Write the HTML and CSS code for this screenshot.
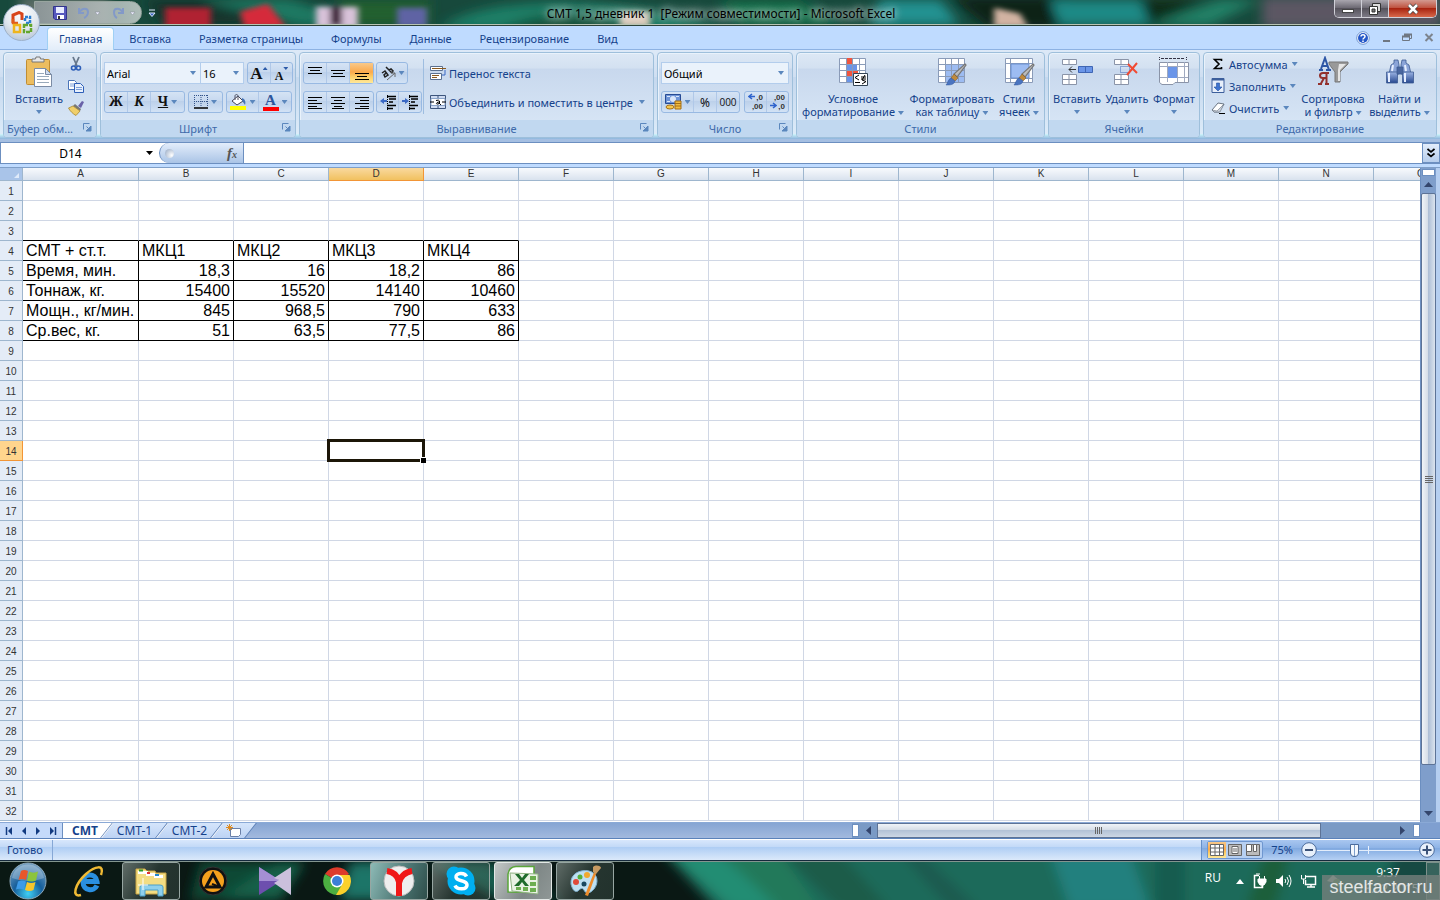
FILE: index.html
```html
<!DOCTYPE html>
<html lang="ru">
<head>
<meta charset="utf-8">
<title>СМТ 1,5 дневник 1 - Microsoft Excel</title>
<link rel="stylesheet" href="styles.css">
</head>
<body>
<svg class="defs" width="0" height="0" aria-hidden="true">
  <defs>
    <linearGradient id="brushMetal" x1="0" x2="1" y1="0" y2="1"><stop offset="0" stop-color="#fff"/><stop offset="1" stop-color="#777"/></linearGradient>
    <linearGradient id="blueBall" x1="0" x2="0" y1="0" y2="1"><stop offset="0" stop-color="#9cb4e4"/><stop offset="1" stop-color="#26478f"/></linearGradient>
    <filter id="soft" x="-20%" y="-20%" width="140%" height="140%"><feGaussianBlur stdDeviation="6"/></filter>
    <filter id="soft2" x="-20%" y="-20%" width="140%" height="140%"><feGaussianBlur stdDeviation="3"/></filter>
    <symbol id="launch" viewBox="0 0 9 9"><path d="M.5 6.500V.5H6.500" fill="none" stroke="#5b87bd"/><path d="M3.500 3.500l2 2M8 3v5H3z" fill="#5b87bd" stroke="#5b87bd"/></symbol>
    <symbol id="brush" viewBox="0 0 22 24"><path d="M20 1l1 1L12 14l-3-3z" fill="url(#brushMetal)" stroke="#777" stroke-width="1.200"/><path d="M9 11l4 4-3 3-4-3z" fill="#c08a3c" stroke="#7b5420" stroke-width=".5"/><path d="M6 15l4 3c-1 4-5 4-9 4 2-2 2-6 5-7z" fill="#4a74c0" stroke="#33569b" stroke-width=".5"/></symbol>
  </defs>
</svg>

<header class="titlebar">
  <svg class="aero" viewBox="0 0 1440 26" preserveAspectRatio="none" aria-hidden="true">
    <rect width="1440" height="26" fill="#17493c"/>
    <g filter="url(#soft)">
      <rect x="20" y="-5" width="90" height="36" fill="#5c6d66"/>
      <path d="M145 0h190l-80 26h-90z" fill="#12302b"/><path d="M200 0h90l80 26h-70z" fill="#1c7a63"/>
      <path d="M340 0h90v26h-90z" fill="#24602f"/><path d="M440 30C480-6 620-6 720 30z" fill="#1a8068"/><path d="M500 30c50-22 100-22 140 0z" fill="#155039"/>
      <path d="M720 0h80l40 26H740z" fill="#116a44"/><path d="M880 0h60l20 26h-90z" fill="#219292"/>
      <path d="M950-4h120v34H990z" fill="#0c2019"/><path d="M1050 0h90l20 26h-100z" fill="#1f8a86"/><path d="M1140 0h70l-60 26z" fill="#0b2a16"/><path d="M1220 0h40l-50 26h-60z" fill="#218267"/>
      <path d="M1262-4h180v34H1262z" fill="#5b5764"/>
    </g>
    <g filter="url(#soft2)">
      <rect x="165" y="8" width="46" height="22" fill="#b02433"/><path d="M240 12l28-8 18 24h-42z" fill="#d52c3b"/>
      <rect x="316" y="7" width="42" height="22" fill="#d9c3da"/><rect x="330" y="7" width="12" height="20" fill="#3c2439"/>
      <rect x="397" y="8" width="30" height="20" fill="#5f63a4"/><rect x="620" y="12" width="30" height="16" fill="#d9c8b8"/><path d="M994 8l26 6 8 14h-34z" fill="#d2b3a2"/>
    </g>
  </svg>
  <div class="quick">
    <button aria-label="Сохранить"><svg width="14" height="14" viewBox="0 0 14 14"><path d="M.5.5h13v13H2l-1.500-1.500z" fill="#5658bd" stroke="#32348c"/><path d="M3 1h8v6H3z" fill="#e8ecff"/><path d="M4 9h7v4H4z" fill="#fff"/><path d="M5 10h2v3H5z" fill="#333"/></svg></button>
    <button aria-label="Отменить"><svg width="24" height="14" viewBox="0 0 24 14"><path d="M2 2v5h5M2 7c3-6 9-5 9-1 0 3-2 5-4 6" fill="none" stroke="#8299c8" stroke-width="2"/><path d="M18 6h5l-2.500 3z" fill="#eef" stroke="#8b929c" stroke-width=".6"/></svg></button>
    <button aria-label="Вернуть"><svg width="26" height="14" viewBox="0 0 26 14"><path d="M12 2v5H7M12 7C9 1 3 2 3 6c0 3 1 5 3 6" fill="none" stroke="#8299c8" stroke-width="2"/><path d="M19 6h5l-2.500 3z" fill="#eef" stroke="#8b929c" stroke-width=".6"/></svg></button>
  </div>
  <button class="quick-more" aria-label="Настройка панели"><svg width="8" height="8" viewBox="0 0 8 8"><path d="M1 1h6M1 4h6L4 7.500z" stroke="#dfe9ff" fill="#3c64c0"/></svg></button>
  <h1 class="title">СМТ 1,5 дневник 1&nbsp; [Режим совместимости] - Microsoft Excel</h1>
  <div class="winbtns">
    <button aria-label="Свернуть"><svg width="14" height="12" viewBox="0 0 14 12"><rect x="1.500" y="6.500" width="11" height="3" fill="#fff" stroke="#444"/></svg></button>
    <button aria-label="Восстановить"><svg width="14" height="12" viewBox="0 0 14 12"><path d="M4.500.5h8v8h-8z" fill="#ddd" stroke="#333"/><path d="M1.500 3.500h8v8h-8z" fill="#fff" stroke="#333"/><path d="M4 6h3v3H4z" fill="#777" stroke="#333"/></svg></button>
    <button class="x" aria-label="Закрыть"><svg width="14" height="12" viewBox="0 0 14 12"><path d="M3 2l8 8M11 2l-8 8" stroke="#444" stroke-width="4"/><path d="M3 2l8 8M11 2l-8 8" stroke="#fff" stroke-width="2.500"/></svg></button>
  </div>
</header>
<button class="office" aria-label="Кнопка Office"><svg width="22" height="24" viewBox="0 0 22 24" fill="none"><path d="M11 9V3L8 1.500 2 4v8" stroke="#d8451a" stroke-width="3"/><path d="M2 8v4h5" stroke="#e05c1c" stroke-width="2.500"/><path d="M14 10V6h5v6h-5" stroke="#2d7fd0" stroke-width="2.500" stroke-dasharray="3 1"/><path d="M3 14h6v7H3z" stroke="#efb51c" stroke-width="2.500"/><path d="M13 14h7v7h-7z" stroke="#63a62c" stroke-width="2.500" stroke-dasharray="4 1"/></svg></button>

<nav class="tabs">
  <a class="tab on" href="#home">Главная</a><a class="tab" href="#insert">Вставка</a><a class="tab" href="#page">Разметка страницы</a><a class="tab" href="#formulas">Формулы</a><a class="tab" href="#data">Данные</a><a class="tab" href="#review">Рецензирование</a><a class="tab" href="#view">Вид</a>
  <div class="docbtns">
    <button aria-label="Справка"><svg width="14" height="14" viewBox="0 0 14 14"><circle cx="7" cy="7" r="6.300" fill="#fff" stroke="#6f94cf"/><circle cx="7" cy="7" r="5" fill="#2558c8"/><path d="M5 5.500c0-2.500 4-2.500 4 0C9 7 7 7 7 8.500M7 9.500V11" stroke="#fff" stroke-width="1.500" fill="none"/></svg></button>
    <button aria-label="Свернуть окно"><svg width="8" height="10" viewBox="0 0 8 10"><path d="M1 8h7" stroke="#6f7782" stroke-width="2"/></svg></button>
    <button aria-label="Восстановить окно"><svg width="10" height="9" viewBox="0 0 10 9"><path d="M2.500 3V1.500h7v4H8M.5 3.500h7v4h-7z" fill="none" stroke="#6f7782"/><path d="M0 3.500h8M2 1.500h8" stroke="#6f7782" stroke-width="2"/></svg></button>
    <button aria-label="Закрыть окно"><svg width="10" height="9" viewBox="0 0 10 9"><path d="M1.500 1l7 7M8.500 1l-7 7" stroke="#7d848e" stroke-width="2"/></svg></button>
  </div>
</nav>

<main class="ribbon">
  <section class="group g-clip">
    <div class="gbody">
      <button class="big"><svg width="28" height="32" viewBox="0 0 28 32"><rect x="1.500" y="3.500" width="23" height="25" rx="1" fill="#ecbd60" stroke="#c08d33"/><path d="M7 6V3h3.500L11 1h4l.5 2H19v3z" fill="#e8e8e8" stroke="#777"/><path d="M9.500 12.500h11l6 6v12h-17z" fill="#fff" stroke="#7b8ca5"/><path d="M20.500 12.500v6h6z" fill="#cfdcef" stroke="#7b8ca5"/><path d="M12 17.500h7M12 20.500h12M12 23.500h12M12 26.500h12" stroke="#9ab"/></svg><span>Вставить</span><i class="arr"></i></button>
      <div class="stack clipicons">
        <button aria-label="Вырезать"><svg width="16" height="16" viewBox="0 0 16 16"><path d="M5 1l4 9M11 1L7 10" stroke="#68788c" stroke-width="1.800"/><circle cx="5.500" cy="12" r="2" fill="none" stroke="#2e5fb8" stroke-width="1.600"/><circle cx="10.500" cy="12" r="2" fill="none" stroke="#2e5fb8" stroke-width="1.600"/></svg></button>
        <button aria-label="Копировать"><svg width="16" height="16" viewBox="0 0 16 16"><path d="M.5 2.500h6l2 2v7h-8z" fill="#fff" stroke="#4a74b8"/><path d="M6.500 5.500h6l3 3v6h-9z" fill="#e8f0fc" stroke="#2e5fb8"/><path d="M8 9.500h6M8 11.500h6M2 6h4M2 8h4" stroke="#7ea0d8"/></svg></button>
        <button aria-label="Формат по образцу"><svg width="16" height="16" viewBox="0 0 16 16"><path d="M10 6l4-5 2 1-3 6z" fill="#6a62a8"/><path d="M7 4l6 5-1 2-7-5z" fill="#777"/><path d="M5 6l7 5-4 4.500C5 14 2 11 .5 8z" fill="#f0cf6a" stroke="#a88830" stroke-width=".8"/></svg></button>
      </div>
    </div>
    <footer>Буфер обм...<svg class="launch" width="9" height="9"><use href="#launch"/></svg></footer>
  </section>

  <section class="group g-font">
    <div class="gbody rows">
      <div class="row">
        <div class="combos"><label class="combo font"><input value="Arial" aria-label="Шрифт"><i class="arr"></i></label><label class="combo size"><input value="16" aria-label="Размер"><i class="arr"></i></label></div>
        <div class="bg"><button class="w23 serif" aria-label="Увеличить размер"><b class="a18">A</b><i class="arr up"></i></button><button class="w21 serif" aria-label="Уменьшить размер"><b class="a13">A</b><i class="arr up dn"></i></button></div>
      </div>
      <div class="row">
        <div class="bg"><button class="w23 serif"><b>Ж</b></button><button class="w23 serif"><b><em>К</em></b></button><button class="w34 serif"><b><u>Ч</u></b><i class="arr"></i></button></div>
        <div class="bg"><button class="w34" aria-label="Границы"><svg width="14" height="14" viewBox="0 0 14 14"><path d="M.5 0v12M7 0v12M13.500 0v12M0 .5h14M0 6.500h14" stroke="#33538a" stroke-dasharray="1 1"/><path d="M0 13h14" stroke="#000" stroke-width="1.500"/></svg><i class="arr"></i></button></div>
        <div class="bg"><button class="w33" aria-label="Цвет заливки"><svg width="17" height="16" viewBox="0 0 17 16"><path d="M2 7l6-5 5 5-6 4z" fill="#fff" stroke="#445" /><path d="M5 6V2c0-2 3-2 3 0v4" fill="none" stroke="#556"/><path d="M12 4c3 1 4 4 3 7-1-2-2-3-3-4z" fill="#4473b5"/><path d="M0 12h16v4H0z" fill="#ff0"/></svg><i class="arr"></i></button><button class="w33" aria-label="Цвет текста"><span class="fontcolor">A</span><i class="arr"></i></button></div>
      </div>
    </div>
    <footer>Шрифт<svg class="launch" width="9" height="9"><use href="#launch"/></svg></footer>
  </section>

  <section class="group g-align">
    <div class="gbody cols">
      <div class="rows">
        <div class="row">
          <div class="bg"><button class="w23" aria-label="По верхнему краю"><svg width="14" height="14"><path d="M0 1.500h14M2 4.500h10M0 7.500h14" stroke="#000"/></svg></button><button class="w23" aria-label="По середине"><svg width="14" height="14"><path d="M0 4.500h14M2 7.500h10M0 10.500h14" stroke="#000"/></svg></button><button class="w23 hot" aria-label="По нижнему краю"><svg width="14" height="14"><path d="M0 7.500h14M2 10.500h10M0 13.500h14" stroke="#000"/></svg></button></div>
          <div class="bg"><button class="w30" aria-label="Ориентация"><svg width="16" height="16" viewBox="0 0 16 16"><path d="M2 8l3-2 3 4-3 2-1-2 2-2M6 2l6 6M9 5l2-1 2 2-1 2" fill="none" stroke="#222" stroke-width="1.500"/><path d="M7 15l8-7M15 12V8h-4" fill="none" stroke="#666"/></svg><i class="arr"></i></button></div>
        </div>
        <div class="row">
          <div class="bg"><button class="w23" aria-label="По левому краю"><svg width="14" height="13"><path d="M0 1.500h14M0 4.500h9M0 7.500h14M0 10.500h9M0 12.500h14" stroke="#000"/></svg></button><button class="w23" aria-label="По центру"><svg width="14" height="13"><path d="M0 1.500h14M3 4.500h8M0 7.500h14M3 10.500h8M1 12.500h12" stroke="#000"/></svg></button><button class="w23" aria-label="По правому краю"><svg width="14" height="13"><path d="M0 1.500h14M5 4.500h9M0 7.500h14M5 10.500h9M0 12.500h14" stroke="#000"/></svg></button></div>
          <div class="bg"><button class="w22" aria-label="Уменьшить отступ"><svg width="16" height="15"><path d="M7 1.500h9M9 4h7M9 7h4M7 10.500h9M7 13.500h6" stroke="#000" stroke-width="1.500"/><path d="M7.500 0v15" stroke="#000" stroke-dasharray="1 1"/><path d="M4 3v2h3v2H4v2L0 6z" fill="#3a68c4"/></svg></button><button class="w22" aria-label="Увеличить отступ"><svg width="16" height="15"><path d="M7 1.500h9M9 4h7M9 7h4M7 10.500h9M7 13.500h6" stroke="#000" stroke-width="1.500"/><path d="M7.500 0v15" stroke="#000" stroke-dasharray="1 1"/><path d="M3 3v2H0v2h3v2l4-3z" fill="#3a68c4"/></svg></button></div>
        </div>
      </div>
      <div class="rows wide">
        <button class="txt"><svg width="16" height="16" viewBox="0 0 16 16"><path d="M.5 1.500h12v4H.5zM.5 8.500h11v6H.5z" fill="#fff" stroke="#5a7090"/><path d="M2 3.500h14M2 10.500h7M2 12.500h5" stroke="#8a5a20"/><path d="M15 5v5h-3" stroke="#3a68c4" fill="none"/></svg>Перенос текста</button>
        <button class="txt"><svg width="16" height="16" viewBox="0 0 16 16"><path d="M.5 1.500h15v13H.5zM8 1v3M8 12v3" fill="#cfdcf2" stroke="#3d557c"/><path d="M1 4.500h14v7H1z" fill="#fff" stroke="#8aa3c8"/><path d="M6 6.500q3-1 3.500.5v3M9.500 8C6 8 5.500 10.500 8 10q1.500-.5 1.500-1M10 10.500h1" fill="none" stroke="#000"/><path d="M0 8h4M12 8h4" stroke="#000"/></svg>Объединить и поместить в центре<i class="arr"></i></button>
      </div>
    </div>
    <footer>Выравнивание<svg class="launch" width="9" height="9"><use href="#launch"/></svg></footer>
  </section>

  <section class="group g-num">
    <div class="gbody rows">
      <label class="combo"><input value="Общий" aria-label="Числовой формат"><i class="arr"></i></label>
      <div class="row">
        <div class="bg"><button class="w33" aria-label="Финансовый формат"><svg width="17" height="16" viewBox="0 0 17 16"><path d="M.5.5h15v9H.5z" fill="#6d93d6" stroke="#274b94"/><ellipse cx="8" cy="5" rx="3" ry="3" fill="#d9e6fb"/><path d="M2 2.500h3M11 2.500h3M2 7.500h3" stroke="#dbe7fb"/><path d="M10 7h6v8h-6z" fill="#f1bd42" stroke="#a66f14"/><path d="M10 9.500h6M10 12h6" stroke="#a66f14"/><ellipse cx="5" cy="13" rx="4" ry="2" fill="#f3c852" stroke="#a66f14"/></svg><i class="arr"></i></button><button class="w23 n13">%</button><button class="w22 n12">000</button></div>
        <div class="bg"><button class="w22 dec" aria-label="Увеличить разрядность"><span><svg width="7" height="7"><path d="M7 3.500H1M4 1L1 3.500 4 6" fill="none" stroke="#2d62cc" stroke-width="1.500"/></svg>,0</span><span>,00</span></button><button class="w21 dec" aria-label="Уменьшить разрядность"><span>,00</span><span><svg width="7" height="7"><path d="M0 3.500h6M3 1l3 2.500L3 6" fill="none" stroke="#2d62cc" stroke-width="1.500"/></svg>,0</span></button></div>
      </div>
    </div>
    <footer>Число<svg class="launch" width="9" height="9"><use href="#launch"/></svg></footer>
  </section>

  <section class="group g-styles">
    <div class="gbody">
      <button class="big w112"><svg width="32" height="32" viewBox="0 0 32 32"><path d="M2.500 2.500h26v24h-26z" fill="#fff" stroke="#8a9bb8"/><path d="M9 2h7v6H9zM9 14h12v6H9z" fill="#f0553e"/><path d="M9 8h11v6H9zM9 20h6v6H9z" fill="#6a95e8"/><path d="M2 8.500h26M2 14.500h26M2 20.500h26M9.500 2v24M15.500 2v24M22.500 2v24" stroke="#8a9bb8"/><path d="M16.500 17.500h14v12h-14z" fill="#fff" stroke="#345"/><path d="M22 19l-4 2.500 4 2.500M18 26.500h5M24 21h5M24 23h5M28 19l-3 5M25 24l4 1.500-4 2.500" fill="none" stroke="#000"/></svg><span>Условное<br>форматирование<i class="arr"></i></span></button>
      <button class="big w86"><svg width="32" height="32" viewBox="0 0 32 32"><path d="M2.500 2.500h26v24h-26z" fill="#fff" stroke="#8a9bb8"/><path d="M9 8h19v18H9z" fill="#9dbcf2"/><path d="M2 8.500h26M2 14.500h26M2 20.500h26M9.500 2v24M15.500 2v24M22.500 2v24" stroke="#8a9bb8"/><use href="#brush" x="9" y="7" width="22" height="24"/></svg><span>Форматировать<br>как таблицу<i class="arr"></i></span></button>
      <button class="big w46"><svg width="32" height="32" viewBox="0 0 32 32"><path d="M2.500 2.500h27v24h-27z" fill="#fff" stroke="#8a9bb8"/><path d="M2 7.500h27M2 22.500h27M7.500 2v24M25.500 2v24" stroke="#8a9bb8"/><path d="M8 8h18v14H8z" fill="#9dbcf2" stroke="#6b8fd0"/><use href="#brush" x="10" y="7" width="22" height="24"/></svg><span>Стили<br>ячеек<i class="arr"></i></span></button>
    </div>
    <footer>Стили</footer>
  </section>

  <section class="group g-cells">
    <div class="gbody">
      <button class="big w52"><svg width="32" height="32" viewBox="0 0 32 32"><path d="M1.500 3.500h14v5h-14zM8 3v5M1.500 18.500h14v10h-14zM8 18v10M1 23.500h14" fill="#fff" stroke="#8a94a8"/><path d="M17.500 10.500h14v6h-14zM24.500 10v6" fill="#6a95e8" stroke="#3f66b4"/><path d="M15 13.500H8M11 10.500l-3 3 3 3" fill="none" stroke="#333"/></svg><span>Вставить</span><i class="arr"></i></button>
      <button class="big w48"><svg width="32" height="32" viewBox="0 0 32 32"><path d="M3.500 3.500h14v5h-14zM10 3v5M3.500 18.500h14v10h-14zM10 18v10M3 23.500h14" fill="#fff" stroke="#8a94a8"/><path d="M9.500 10.500h9v6h-9z" fill="none" stroke="#3f66b4" stroke-dasharray="1 1"/><path d="M17 8l9 9M26 7l-10 12" stroke="#f04a32" stroke-width="2"/></svg><span>Удалить</span><i class="arr"></i></button>
      <button class="big w44"><svg width="32" height="32" viewBox="0 0 32 32"><path d="M1.500 6.500h29v20H17l-2 2H4l-2.500-2z" fill="#fff" stroke="#8a94a8"/><path d="M2 10.500h28M2 21.500h28M9.500 6v20M19.500 6v20M26.500 6v20" stroke="#a0aac0"/><path d="M10 11h9v11h-9z" fill="#6a95e8"/><path d="M3 2.500h24" stroke="#334" stroke-dasharray="3 1"/><path d="M1.500 1v4M28.500 1v4" stroke="#334" stroke-dasharray="1 1"/></svg><span>Формат</span><i class="arr"></i></button>
    </div>
    <footer>Ячейки</footer>
  </section>

  <section class="group g-edit">
    <div class="gbody">
      <div class="stack edits">
        <button class="txt"><svg width="14" height="16" viewBox="0 0 14 16"><path d="M10.500 5V3.500H3.500L8 8l-4.500 4.500h7V11" fill="none" stroke="#000" stroke-width="1.600"/></svg>Автосумма<i class="arr"></i></button>
        <button class="txt"><svg width="14" height="16" viewBox="0 0 14 16"><path d="M1 .5h12v14H1z" fill="#e7effb" stroke="#3c5f9c"/><path d="M1 1.500h12" stroke="#3c5f9c" stroke-width="2"/><path d="M5.500 5h3v4H11l-4 4-4-4h2.500z" fill="#3f73cf" stroke="#2450a0" stroke-width=".6"/></svg>Заполнить<i class="arr"></i></button>
        <button class="txt"><svg width="14" height="16" viewBox="0 0 14 16"><path d="M1 10l6-7 6 1-5 8H3z" fill="#fff" stroke="#6b7684"/><path d="M1 10l5 1 7-7-4 8H3z" fill="#c9d0da" stroke="#6b7684" stroke-width=".6"/><path d="M8 13.500h6" stroke="#000"/></svg>Очистить<i class="arr"></i></button>
      </div>
      <button class="big w68"><svg width="32" height="32" viewBox="0 0 32 32"><path d="M12 6h19v2l-8 8v10h-5v-10l-6-8z" fill="#999" stroke="#777"/><path d="M22 8h7l-6 6v11h-2v-11z" fill="#e5e5e5"/><path d="M2 14h4M9 14h5M4 13L8 2l4 12M5 10h5" fill="none" stroke="#2d56a5" stroke-width="2"/><path d="M12 17H6c-4 0-4 5 0 5h4M9.500 17v11M7 22l-3 5.500M1 28h4M8 28h4" fill="none" stroke="#93302d" stroke-width="2"/></svg><span>Сортировка<br>и фильтр<i class="arr"></i></span></button>
      <button class="big w64"><svg width="32" height="32" viewBox="0 0 32 32" stroke="#3d5a92" stroke-width=".8"><path d="M10 4h4l1 5v9H5l2-9 3-2z" fill="#8ba4d8"/><path d="M18 4h4v3l3 2 2 9H17V9z" fill="#8ba4d8"/><path d="M2.500 16h11v11h-11zM18.500 16h11v11h-11z" fill="url(#blueBall)"/><path d="M13 11h6v7h-6z" fill="#4a669f"/><path d="M5 17v9M21 17v9M9 9l-1 6M21 9l1 6" stroke="#e6eeff" stroke-width="2"/></svg><span>Найти и<br>выделить<i class="arr"></i></span></button>
    </div>
    <footer>Редактирование</footer>
  </section>
</main>

<div class="formula">
  <div class="namebox"><input value="D14" aria-label="Имя"><i class="arr black"></i></div>
  <div class="fx"><b></b><button aria-label="Вставить функцию"><em>f<small>x</small></em></button></div>
  <input class="finput" aria-label="Строка формул">
  <button class="expand" aria-label="Развернуть"><svg width="8" height="10" viewBox="0 0 8 10"><path d="M.5 1L4 4l3.500-3M.5 5.500l3.500 3 3.500-3" fill="none" stroke="#000" stroke-width="1.700"/></svg></button>
</div>

<div class="work">
  <div class="sheet"><table class="grid" id="grid"><thead></thead><tbody></tbody></table></div>
  <div class="vscroll"><i class="split"></i><i class="vend up"></i><div class="vthumb"><i></i></div><i class="vend down"></i></div>
</div>

<div class="bottom">
  <div class="sheetnav">
    <button aria-label="Первый лист"><svg width="8" height="8"><path d="M1.500 0v8" stroke="#123a80" stroke-width="1.500"/><path d="M7 0v8L3 4z" fill="#123a80"/></svg></button>
    <button aria-label="Предыдущий лист"><svg width="8" height="8"><path d="M6 0v8L2 4z" fill="#123a80"/></svg></button>
    <button aria-label="Следующий лист"><svg width="8" height="8"><path d="M2 0v8l4-4z" fill="#123a80"/></svg></button>
    <button aria-label="Последний лист"><svg width="8" height="8"><path d="M1 0v8l4-4z" fill="#123a80"/><path d="M6.500 0v8" stroke="#123a80" stroke-width="1.500"/></svg></button>
  </div>
  <div class="sheettabs">
    <button class="on">СМТ</button><button>СМТ-1</button><button>СМТ-2</button><button class="new" aria-label="Новый лист"><svg width="16" height="14" viewBox="0 0 16 14"><path d="M4.500 4.500h10v6l-2 2h-8z" fill="#fff" stroke="#6a80a8"/><path d="M3.500 0v7M0 3.500h7M1 1l5 5M6 1L1 6" stroke="#e08a1c"/></svg></button>
  </div>
  <div class="hscroll"><i class="hsplit"></i><i class="hend left"></i><div class="hthumb"><i></i></div><i class="hgap"></i><i class="hend right"></i><i class="hsplit"></i></div>
</div>

<div class="status">
  <span class="ready">Готово</span>
  <div class="zoombar">
    <div class="views">
      <button class="hot" aria-label="Обычный"><svg width="14" height="12"><path d="M.5.5h13v11H.5zM0 4h14M0 8h14M5 0v12M9.500 0v12" fill="#fff" stroke="#666"/></svg></button>
      <button aria-label="Разметка"><svg width="14" height="12"><path d="M.5.5h13v11H.5z" fill="#bbb" stroke="#666"/><path d="M4 2.500h6v7H4z" fill="#fff" stroke="#666"/><path d="M5 5h4M5 7h4" stroke="#666"/></svg></button>
      <button aria-label="Страничный"><svg width="14" height="12"><path d="M.5.5h13v11H.5z" fill="#bbb" stroke="#666"/><path d="M.5.5h5v7h-5zM7.500.5h3v7h-3z" fill="#fff" stroke="#666"/></svg></button>
    </div>
    <button class="pct">75%</button>
    <button class="rnd" aria-label="Уменьшить"><svg width="16" height="16" viewBox="0 0 16 16"><circle cx="8" cy="8" r="7.300" fill="#e8f0fb" stroke="#4c6c9c"/><path d="M4 8h8" stroke="#3b5278" stroke-width="2"/></svg></button>
    <div class="slider"><input type="range" min="0" max="100" value="36" aria-label="Масштаб"></div>
    <button class="rnd" aria-label="Увеличить"><svg width="16" height="16" viewBox="0 0 16 16"><circle cx="8" cy="8" r="7.300" fill="#e8f0fb" stroke="#4c6c9c"/><path d="M3.500 8h9M8 3.500v9" stroke="#3b5278" stroke-width="2"/></svg></button>
  </div>
</div>

<footer class="taskbar">
  <svg class="aero" viewBox="0 0 1440 40" preserveAspectRatio="none" aria-hidden="true">
    <rect width="1440" height="40" fill="#0a1814"/>
    <g filter="url(#soft)">
      <path d="M200 0h70l-30 40h-50z" fill="#0f4a34"/><path d="M275 0h30l-25 40h-60z" fill="#17604a"/><path d="M350 0h60l-20 40h-50z" fill="#1d7568"/>
      <path d="M430 0h60l70 40h-60z" fill="#165a4c"/>
      <path d="M655-20h800v80H725z" fill="#1e6a5a"/><path d="M668-10h50l65 60h-50z" fill="#248d73"/><path d="M720-10h60l40 60h-40z" fill="#20795a"/><path d="M780-10h60l50 60h-50z" fill="#1d5c49"/><path d="M900-10h20l60 60h-30z" fill="#1b5a50"/>
      <path d="M1050-10h80l20 60h-80z" fill="#21807e"/><path d="M1155-10h30v60h-30z" fill="#195c50"/><path d="M1265-10h25l-15 60h-30z" fill="#1d5f3a"/><path d="M1395-10h70v60h-90z" fill="#164a42"/>
    </g>
  </svg>
  <div class="apps">
    <button class="start" aria-label="Пуск"><svg width="38" height="38" viewBox="0 0 38 38"><defs><radialGradient id="orb" cx=".5" cy=".85" r=".8"><stop offset="0" stop-color="#3fd0f5"/><stop offset=".5" stop-color="#175f9c"/><stop offset="1" stop-color="#6f9cc0"/></radialGradient></defs><circle cx="19" cy="19" r="18" fill="url(#orb)" stroke="#8fa9ba"/><path d="M3 16C6-2 32-2 35 16 25 20 14 20 3 16z" fill="#fff" opacity=".25"/><path d="M12 9c2-1.500 5-1 7 0l-2 9c-2-1-5-1.500-7.500 0z" fill="#e8572a"/><path d="M20 9.500c3 1.500 6 1.500 9 0l-2 9c-3 1.500-6 1-9 0z" fill="#8cc43c"/><path d="M9 19.500c3-1.500 5-1 8 0l-2 8c-3-1-6-1-8 0z" fill="#3d9be8"/><path d="M18 20c3 1.500 6 1 8.500 0l-2 8c-3 1.500-6 1-8.500 0z" fill="#f8c62c"/></svg></button>
    <button aria-label="Internet Explorer"><svg width="34" height="34" viewBox="0 0 34 34"><path d="M25 21.500c-3 6.500-14 5.500-14-3.500s13-9.500 14-.5H12" fill="none" stroke="#2a8fe0" stroke-width="5"/><path d="M29 11c4-11-6-9-15-1C3 20-1 34 9 31" fill="none" stroke="#f0ba34" stroke-width="2.500"/></svg></button>
    <button class="open" aria-label="Проводник"><svg width="34" height="34" viewBox="0 0 34 34"><path d="M2 5h9l2 2h8l1 2h10v21H2z" fill="#f3dd83" stroke="#c9a443"/><path d="M4 7h10v3H4zM12 9h9v3h-9zM20 11h9v3h-9z" fill="#fff"/><path d="M5 5.500h4v2H5z" fill="#2a9b2a"/><path d="M13 8h3v2h-3z" fill="#d33"/><path d="M21 10h4v2h-4z" fill="#28c"/><path d="M6 32V23q0-2 3-2h17q3 0 3 2v9h-5v-6H11v6z" fill="#8ed0ec" stroke="#4b9fc7"/><path d="M9 14v12M4 21h10" stroke="#fff"/></svg></button>
    <button aria-label="AIMP"><svg width="30" height="30" viewBox="0 0 30 30"><circle cx="15" cy="15" r="14" fill="#111" stroke="#333"/><circle cx="15" cy="15" r="11" fill="#f5a11d"/><path d="M15 8l7 13H8z" fill="none" stroke="#111" stroke-width="3"/><path d="M14 18l8 3" stroke="#111" stroke-width="2"/></svg></button>
    <button aria-label="KMPlayer"><svg width="32" height="28" viewBox="0 0 32 28"><path d="M0 0l22 14L0 28z" fill="#6d4fae"/><path d="M0 0l22 14H0z" fill="#a58fd4"/><path d="M32 0v28L15 16l5-3-5-2z" fill="#cbc0dc"/></svg></button>
    <button aria-label="Google Chrome"><svg width="28" height="28" viewBox="0 0 28 28"><path d="M14 14L2 7a14 14 0 0 1 24 0z" fill="#dd3b2b"/><path d="M14 14L2 7a14 14 0 0 0 12 21l6-11z" fill="#4caf41"/><path d="M14 8h12.600A14 14 0 0 1 13 28l7-12z" fill="#fbd12b"/><circle cx="14" cy="14" r="6.500" fill="#fff"/><circle cx="14" cy="14" r="5" fill="#3c7fd8"/></svg></button>
    <button class="open teal" aria-label="Яндекс"><svg width="32" height="32" viewBox="0 0 32 32"><circle cx="16" cy="16" r="15" fill="#eee" stroke="#bbb"/><path d="M4 6c8 1 11 6 12 11v14M29 6c-7 1-12 6-13 12" fill="none" stroke="#f01818" stroke-width="6"/></svg></button>
    <button class="open" aria-label="Skype"><svg width="32" height="32" viewBox="0 0 32 32"><circle cx="16" cy="16" r="13.500" fill="#00aff0"/><circle cx="9" cy="9" r="7.500" fill="#00aff0"/><circle cx="23" cy="23" r="7.500" fill="#00aff0"/><path d="M21.500 11.500C19.500 7 10.500 8 11 12c.5 5 11 2.500 11 8 0 5-10 5-12 .5" fill="none" stroke="#fff" stroke-width="3.500"/></svg></button>
    <button class="open bright" aria-label="Microsoft Excel"><svg width="32" height="32" viewBox="0 0 32 32"><path d="M1 27V9q1-7 8-7.500h18v26z" fill="#fff" stroke="#5aa63a" stroke-width="1.500"/><path d="M3 8l28 1v20L5 26z" fill="#e9f2e4" stroke="#8fb282"/><path d="M8 9h4l3 4 3-4h4l-5 6 5 6h-4l-3-4-3 4H7l6-6z" fill="#1f6b2c"/><path d="M23 11h6v4h-6zM23 17h6v4h-6zM23 23h6v4h-6zM16 22h5v4h-5zM9 22h5v3H9z" fill="#6cae50"/></svg></button>
    <button class="open" aria-label="Paint"><svg width="34" height="34" viewBox="0 0 34 34"><path d="M3 20C2 10 12 5 21 7c9 2 10 12 5 18-5 6-9 4-10 1-2-3-4-1-6 1-4 2-6-3-7-7z" fill="#bfe0f2" stroke="#7fb2d0"/><circle cx="8" cy="18" r="3" fill="#e04a3a"/><circle cx="12" cy="13" r="2.500" fill="#52b03c"/><circle cx="19" cy="11" r="3" fill="#f0a92e"/><circle cx="16" cy="20" r="2.500" fill="#1a4860"/><path d="M27 6l2 1-9 25-3-1z" fill="#ee8c2b"/><path d="M25 3c3-3 8-1 8 1l-5 6-3-2z" fill="#c79a62"/></svg></button>
  </div>
  <div class="tray">
    <span class="lang">RU</span>
    <button aria-label="Скрытые значки"><svg width="8" height="5"><path d="M0 5h8L4 0z" fill="#fff"/></svg></button>
    <button aria-label="Питание"><svg width="14" height="16" viewBox="0 0 14 16"><path d="M6 2.500H1.500v12h8V12" fill="none" stroke="#fff" stroke-width="1.500"/><path d="M3 1h4" stroke="#fff"/><path d="M5 6h8v3l-2 3H7L5 9zM6.500 3v3M11.500 3v3M9 12v3" fill="#fff" stroke="#fff"/></svg></button>
    <button aria-label="Громкость"><svg width="16" height="14" viewBox="0 0 16 14"><path d="M0 5h3l4-4v12L3 9H0z" fill="#fff"/><path d="M9 5q1.500 2 0 4M11 3q3 4 0 8M13 1q4 6 0 12" fill="none" stroke="#fff"/></svg></button>
    <button aria-label="Сеть"><svg width="16" height="14" viewBox="0 0 16 14"><path d="M5 2.500h9.500v8H4.500V6M6 13h8M10 10v3" fill="none" stroke="#fff" stroke-width="1.500"/><path d="M.5 1v4h4V1M2.500 5v5" fill="none" stroke="#fff"/></svg></button>
    <button aria-label="Устройство"><svg width="16" height="14" viewBox="0 0 16 14"><path d="M1 7l6-6 7 6-5 2z" fill="#a6b7ab"/><circle cx="11" cy="9" r="4" fill="#5b9b58"/></svg></button>
    <div class="clock">9:37<br>18.02.2015</div>
    <button class="desk" aria-label="Показать рабочий стол"></button>
  </div>
  <div class="watermark">steelfactor.ru</div>
</footer>
<script src="app.js"></script>
</body>
</html>
```

FILE: styles.css
```css
* { box-sizing: border-box; }
html, body { height: 100%; }
body { margin: 0; display: flex; flex-direction: column; overflow: hidden; position: relative; background: #bfdbff; font: 11px/13px "Noto Sans", "Open Sans", sans-serif; color: #15428b; }
button { font: inherit; color: inherit; background: none; border: 0; padding: 0; margin: 0; white-space: nowrap; }
input { font: inherit; color: #000; border: 0; padding: 0; margin: 0; background: none; min-width: 0; outline: 0; }
svg { display: block; flex: none; }
.defs { position: absolute; }
.aero { position: absolute; inset: 0; width: 100%; height: 100%; }
.arr { display: inline-block; flex: none; width: 6px; height: 4px; background: #5b87bd; clip-path: polygon(0 0, 100% 0, 50% 100%); vertical-align: middle; margin-left: 3px; }
.arr.black { width: 7px; height: 4px; background: #000; margin: 0; }
.arr.up { align-self: flex-start; width: 5px; height: 3px; margin: 4px 0 0 0; background: #2c5aa8; clip-path: polygon(50% 0, 100% 100%, 0 100%); }
.arr.dn { clip-path: polygon(0 0, 100% 0, 50% 100%); }

.titlebar { position: relative; flex: none; height: 26px; display: flex; align-items: flex-start; border-bottom: 1px solid #2c4238; overflow: hidden; }
.titlebar::after { content: ""; position: absolute; left: 0; right: 0; bottom: 0; height: 1px; background: #b8c4b4; }
.quick { position: relative; display: flex; align-items: center; gap: 10px; height: 23px; margin: 1px 0 0 34px; padding: 0 8px 0 18px; width: 108px; border: 1px solid #98a59f; border-radius: 0 12px 12px 0; background: linear-gradient(90deg, rgba(150, 158, 162, .8), rgba(212, 218, 216, .8)); }
.quick-more { position: relative; margin: 9px 0 0 6px; }
.title { position: relative; flex: 1; margin: 0; padding: 6px 48px 0 0; text-align: center; font-size: 12px; line-height: 15px; font-family: "Noto Sans", "Open Sans", sans-serif; font-weight: 400; color: #000; text-shadow: 0 0 6px rgba(255, 255, 255, .7), 0 0 12px rgba(255, 255, 255, .7), 0 0 12px rgba(255, 255, 255, .6); }
.winbtns { position: relative; display: flex; height: 18px; margin-right: 3px; border: 1px solid #d0d0d8; border-top: 0; border-radius: 0 0 5px 5px; overflow: hidden; }
.winbtns button { width: 27px; display: grid; place-items: center; background: linear-gradient(#a9a6ae, #67646e 50%, #56535c 50%, #7c7984); border-right: 1px solid #d0d0d8; }
.winbtns .x { width: 47px; border: 0; background: linear-gradient(#d39a90, #bd4c38 50%, #a82410 50%, #d8684a); }
.office { position: absolute; left: 3px; top: 4px; width: 37px; height: 37px; border-radius: 50%; display: grid; place-items: center; z-index: 2; border: 1px solid #9db0c8; background: radial-gradient(circle at 50% 25%, #fff, #e2e8ef 50%, #a9bad0); }

.tabs { flex: none; display: flex; height: 24px; padding-left: 47px; background: #bfdbff; border-bottom: 1px solid #8db2e3; }
.tab { display: block; padding: 5px 14px 0 14px; color: #15428b; text-decoration: none; height: 23px; margin-top: 1px; white-space: nowrap; }
.tab.on { padding: 4px 11px 0 11px; margin-right: 1px; background: linear-gradient(#fff, #e2edf9); border: 1px solid #9fd0f5; border-bottom: 0; border-radius: 4px 4px 0 0; }
.docbtns { margin-left: auto; display: flex; gap: 12px; align-items: center; padding-right: 6px; }
.ribbon { flex: none; display: flex; gap: 3px; height: 92px; padding: 2px 3px 0 3px; background: linear-gradient(#dde9f7, #cfdff2 30%, #c5d8ee 31%, #dcebf9 94%, #c8f0f8 95%, #8db4dc); border-bottom: 3px solid #a5bfe2; }
.group { flex: none; display: flex; flex-direction: column; height: 86px; border: 1px solid #9ebfdb; border-radius: 4px; overflow: hidden; background: linear-gradient(#dde8f5, #d3e1f1 18%, #c8d8ed 19%, #dae8f7 100%); box-shadow: inset 1px 1px 0 #e9f2fb; }
.group footer { display: flex; justify-content: center; align-items: center; position: relative; height: 17px; background: #c1d8f0; color: #3e6aaa; }
.launch { position: absolute; right: 4px; top: 3px; }
.gbody { flex: 1; display: flex; }
.g-clip { width: 94px; }
.g-clip footer { justify-content: flex-start; padding-left: 3px; }
.g-font { width: 196px; }
.g-align { width: 355px; }
.g-num { width: 136px; }
.g-styles { width: 249px; }
.g-cells { width: 152px; }
.g-edit { flex: 1; }
.big { display: flex; flex-direction: column; align-items: center; padding-top: 3px; line-height: 13px; }
.big span { margin-top: 4px; text-align: center; }
.big > .arr { margin: 5px 0 0 0; }
.g-clip .big { width: 70px; }
.stack { display: flex; flex-direction: column; padding-top: 3px; gap: 6px; }
.clipicons { margin-left: -6px; }
.edits { width: 95px; padding-left: 7px; }
.edits .txt { gap: 4px; }
.edits .txt .arr { margin-left: 0; }
.rows { display: flex; flex-direction: column; gap: 7px; padding: 9px 3px 0 3px; }
.cols .rows { padding-right: 0; }
.row { display: flex; justify-content: space-between; gap: 3px; }
.cols .row { justify-content: flex-start; gap: 2px; }
.cols .wide { margin: 6px 0 6px 1px; padding: 3px 0 0 6px; border-left: 1px solid #9ebde0; }
.wide .txt { height: 22px; }
.txt { display: flex; align-items: center; gap: 3px; height: 16px; }
.combos, .bg { display: flex; }
.combo { display: flex; align-items: center; height: 22px; border: 1px solid #b3cdec; background: #eaf2fb; padding: 0 4px 0 2px; }
.combo input { flex: 1; width: 20px; }
.combo .arr { margin: 0; }
.font { width: 97px; }
.size { width: 43px; border-left: 0; }
.bg { border: 1px solid #98b9e2; border-radius: 3px; height: 22px; background: linear-gradient(#d5e3f4, #c6d8ef 45%, #bcd0ea 46%, #d2e2f5); }
.bg button { height: 20px; display: flex; align-items: center; justify-content: center; border-right: 1px solid #b0c8e8; color: #111; }
.bg button:last-child { border-right: 0; }
.bg .hot, .views .hot { background: linear-gradient(#f8c98a, #fba94b 45%, #fdd069 70%, #ffe89a); }
.w21 { width: 21px; } .w22 { width: 22px; } .w23 { width: 23px; } .w30 { width: 30px; } .w33 { width: 32px; } .w34 { width: 33px; }
.w44 { width: 44px; } .w46 { width: 48px; } .w48 { width: 50px; } .w52 { width: 50px; } .w64 { width: 65px; } .w68 { width: 68px; } .w86 { width: 86px; } .w112 { width: 112px; }
.g-cells .gbody { padding-left: 3px; }
.g-num .combo input { width: 90px; }
.serif { font: 14px/20px "Liberation Serif", serif; }
.a18 { font-size: 17px; padding-top: 2px; } .a13 { font-size: 12px; padding-top: 5px; }
.n13 { font-size: 12px; } .n12 { font: 10px "Open Sans", sans-serif; }
.fontcolor { font: bold 15px/13px "Liberation Serif", serif; color: #2c569c; border-bottom: 4px solid #f00; width: 16px; text-align: center; }
.bg .dec { flex-direction: column; align-items: flex-end; padding-right: 3px; font: bold 8px/9px "Liberation Sans", sans-serif; color: #333; }
.dec span { display: flex; gap: 1px; height: 9px; }

.formula { flex: none; display: flex; height: 22px; border-top: 1px solid #6c8fc0; border-bottom: 1px solid #6c8fc0; background: #fff; margin-bottom: 3px; }
.namebox { width: 159px; display: flex; align-items: center; border-left: 1px solid #6c8fc0; }
.namebox input { width: 145px; text-align: center; font-size: 12px; padding-right: 6px; }
.fx { width: 85px; display: flex; align-items: center; justify-content: space-between; border: 1px solid #6c8fc0; border-width: 0 1px; border-radius: 10px 0 0 10px; background: linear-gradient(#e3edfb, #aac4e6); padding: 0 6px 0 5px; }
.fx b { width: 9px; height: 9px; border-radius: 50%; background: radial-gradient(circle at 75% 70%, #fff, #93a6c2); }
.fx em { font: italic bold 15px "Liberation Serif", serif; color: #555; }
.fx small { font-size: 10px; }
.finput { flex: 1; padding-left: 4px; }
.expand { width: 18px; display: grid; place-items: center; border: 1px solid #6c8fc0; background: linear-gradient(#e3edfb, #b6cdec); }

.work { flex: 1; min-height: 0; display: flex; border-top: 1px solid #7f9fc8; }
.sheet { flex: 1; min-width: 0; overflow: hidden; background: #fff; }
.grid { table-layout: fixed; width: 1469px; border-spacing: 0; font: 16px/18px "Liberation Sans", Arial, sans-serif; color: #000; }
.grid th, .grid td { padding: 0; overflow: hidden; white-space: nowrap; }
.grid col.h { width: 23px; } .grid col.a { width: 116px; } .grid col.c { width: 95px; }
.grid thead th { height: 13px; border-right: 1px solid #9eb6ce; border-bottom: 1px solid #9eb6ce; background: linear-gradient(#f8fafd, #d9e2ee); font: 10px/12px "Liberation Sans", Arial, sans-serif; color: #333; }
.grid thead th:first-child { background: #a9c4e9; }
.grid thead th:first-child::after { content: ""; display: block; width: 5px; height: 5px; margin: 3px 3px 0 auto; background: #dfeafa; clip-path: polygon(100% 0, 100% 100%, 0 100%); }
.grid thead th.sel { background: linear-gradient(#f9d99f, #f1c15f); border-color: #f29536; }
.grid tbody th { height: 20px; border-right: 1px solid #9eb6ce; border-bottom: 1px solid #9eb6ce; background: #e4ecf7; font: 10px/12px "Liberation Sans", Arial, sans-serif; color: #333; padding-top: 3px; }
.grid tbody th.sel { background: #ffd58d; border-color: #f29536; }
.grid td { height: 20px; border-right: 1px solid #d0d7e5; border-bottom: 1px solid #d0d7e5; padding: 0 3px; }
.grid td.edge { border-bottom-color: #000; }
.grid td.box { border-color: #000; }
.grid td.num { text-align: right; }
.grid td.cur { position: relative; overflow: visible; }
.cursor { position: absolute; inset: -2px; border: 3px solid #1c1608; }
.cursor::after { content: ""; position: absolute; right: -4px; bottom: -4px; width: 5px; height: 5px; background: #000; border: 1px solid #fff; border-width: 1px 0 0 1px; }
.vscroll { width: 20px; display: flex; flex-direction: column; border-left: 1px solid #6c8fc0; border-right: 4px solid #b5cef0; background: #7f9ecb; align-items: center; }
.split { width: 13px; height: 7px; background: #fff; border: 1px solid #6c8fc0; margin-top: 1px; flex: none; }
.vend { flex: none; width: 9px; height: 5px; background: #33456c; clip-path: polygon(50% 0, 100% 100%, 0 100%); margin: 6px 0 6px; }
.vend.down { clip-path: polygon(0 0, 100% 0, 50% 100%); margin: auto 0 6px; }
.vthumb { width: 15px; height: calc(100% - 82px); flex: none; display: grid; place-items: center; border: 1px solid #5d7396; border-radius: 2px; background: linear-gradient(90deg, #f0f4f8, #d5dde7 45%, #aebfd6 50%, #dbe3ee); }
.vthumb i { width: 8px; height: 7px; background: repeating-linear-gradient(#666 0 1px, transparent 1px 2px); }

.bottom { flex: none; display: flex; height: 17px; border-top: 1px solid #8aa9d6; border-bottom: 1px solid #5b82ba; background: linear-gradient(#86a5d3, #a2b9de); }
.sheetnav { width: 63px; display: flex; justify-content: space-around; align-items: center; padding: 0 2px; background: #c5dafa; border-right: 1px solid #6c8fc0; }
.sheettabs { flex: 1; display: flex; overflow: hidden; font-size: 12px; line-height: 15px; }
.sheettabs button { position: relative; z-index: 1; width: 55px; }
.sheettabs button::before { content: ""; position: absolute; z-index: -1; inset: 0; transform: skewX(-38deg); background: linear-gradient(#d5e5fb, #bdd3f4); border-right: 1px solid #5b7fb5; border-left: 1px solid #fff; }
.sheettabs .on { width: 44px; font-weight: 700; }
.sheettabs .on::before { left: -12px; background: #fff; }
.sheettabs .new { display: grid; place-items: center; width: 34px; }
.hscroll { flex: none; width: 588px; display: flex; align-items: center; background: #7a9ac5; border-right: 20px solid #7f9fd0; }
.hsplit { width: 7px; height: 13px; background: #fff; border: 1px solid #6c8fc0; }
.hend { width: 5px; height: 9px; background: #33456c; margin: 0 6px 0 7px; clip-path: polygon(0 50%, 100% 0, 100% 100%); }
.hend.right { clip-path: polygon(0 0, 100% 50%, 0 100%); margin: 0 8px 0 0; }
.hthumb { width: 444px; height: 15px; display: grid; place-items: center; border: 1px solid #5d7396; background: linear-gradient(#f0f4f8, #d5dde7 45%, #b3c2d6 50%, #cdd7e4); }
.hthumb i { width: 8px; height: 7px; background: repeating-linear-gradient(90deg, #666 0 1px, transparent 1px 2px); }
.hgap { flex: 1; }

.status { flex: none; display: flex; height: 22px; background: linear-gradient(#d8e7fc, #c2d9f7 35%, #aecdf4 36%, #dbe9fa); border-top: 1px solid #fff; border-bottom: 1px solid #15293c; }
.ready { width: 53px; padding: 3px 0 0 7px; border-right: 1px solid #86a8d6; }
.zoombar { margin-left: auto; display: flex; align-items: center; padding: 0 5px; border-left: 1px solid #6790c8; background: linear-gradient(#a9c7f0, #8db3e6 40%, #80a9e0 41%, #b5d0f4); }
.views { display: flex; border: 1px solid #6f97d0; border-radius: 2px; height: 18px; background: #b7d0f2; }
.views button { width: 18px; display: grid; place-items: center; }
.pct { width: 38px; padding-bottom: 2px; }
.slider { width: 102px; display: flex; align-items: center; height: 18px; background: linear-gradient(#eaf2fd, #eaf2fd) center / 1px 8px no-repeat; }
.slider input { appearance: none; width: 100%; height: 14px; background: linear-gradient(#e3edfb, #e3edfb) center / 100% 1px no-repeat; }
.slider input::-webkit-slider-thumb { appearance: none; width: 9px; height: 13px; border: 1px solid #4c6c9c; border-radius: 1px 1px 5px 5px; background: linear-gradient(90deg, #f4f8fd 3px, #7fa0cc 3px 4px, #f4f8fd 4px); }

.taskbar { position: relative; flex: none; display: flex; justify-content: space-between; height: 39px; overflow: hidden; border-top: 1px solid #83958f; }
.apps { position: relative; display: flex; gap: 4px; }
.apps button { width: 58px; height: 38px; display: grid; place-items: center; border-radius: 3px; }
.apps .start { width: 56px; }
.apps .open { border: 1px solid #97a6a2; background: linear-gradient(120deg, rgba(200, 210, 205, .45), rgba(120, 140, 132, .25) 50%, rgba(90, 110, 102, .3)); }
.apps .teal { background: linear-gradient(110deg, #8dbab6, #4a7471 60%, #2f4e4a); }
.apps .bright { background: linear-gradient(120deg, #c3c8c7, #7f8887 60%, #8f9796); border-color: #e3e8e6; }
.tray { position: relative; display: flex; align-items: center; gap: 9px; color: #fff; font: 12px/15px "Open Sans", "Noto Sans", sans-serif; }
.lang { margin: -8px 6px 0 0; }
.clock { text-align: center; width: 70px; margin: 0 0 0 2px; line-height: 16px; }
.desk { width: 14px; height: 38px; border: 1px solid #7d918c; background: rgba(190, 205, 200, .2); margin-left: -6px; }
.watermark { position: absolute; right: 0; bottom: 0; width: 118px; height: 25px; text-align: center; font: 18px/25px "Liberation Sans", Arial, sans-serif; color: #e4e7e6; background: rgba(118, 128, 124, .8); }
```

FILE: app.js
```js
const letters = 'ABCDEFGHIJKLMNO'.split('');
const data = {
  4: ['СМТ + ст.т.', 'МКЦ1', 'МКЦ2', 'МКЦ3', 'МКЦ4'],
  5: ['Время, мин.', '18,3', '16', '18,2', '86'],
  6: ['Тоннаж, кг.', '15400', '15520', '14140', '10460'],
  7: ['Мощн., кг/мин.', '845', '968,5', '790', '633'],
  8: ['Ср.вес, кг.', '51', '63,5', '77,5', '86']
};
const grid = document.getElementById('grid');
const cols = '<colgroup><col class="h"><col class="a">' + '<col class="c">'.repeat(14) + '</colgroup>';
grid.insertAdjacentHTML('afterbegin', cols);
grid.tHead.innerHTML = '<tr><th></th>' + letters.map(l => `<th scope="col"${l === 'D' ? ' class="sel"' : ''}>${l}</th>`).join('') + '</tr>';
let html = '';
for (let r = 1; r <= 32; r++) {
  html += `<tr><th scope="row"${r === 14 ? ' class="sel"' : ''}>${r}</th>`;
  letters.forEach((l, c) => {
    const v = data[r] && data[r][c];
    if (v) html += `<td class="box${/^\d/.test(v) ? ' num' : ''}">${v}</td>`;
    else if (r === 3 && c < 5) html += '<td class="edge"></td>';
    else if (r === 14 && l === 'D') html += '<td class="cur"><div class="cursor"></div></td>';
    else html += '<td></td>';
  });
  html += '</tr>';
}
grid.tBodies[0].innerHTML = html;
```
